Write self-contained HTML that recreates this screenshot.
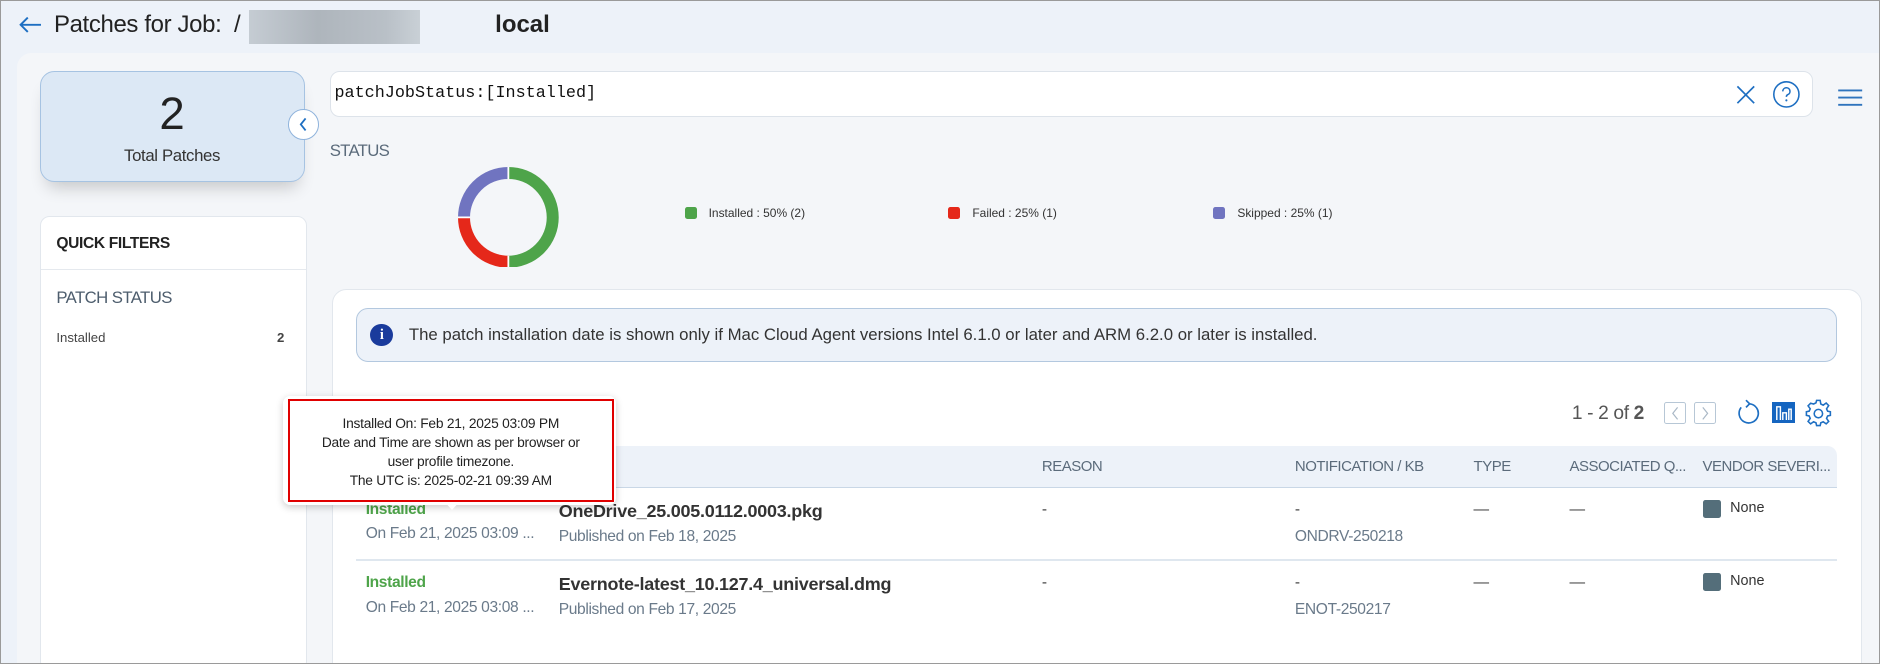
<!DOCTYPE html>
<html><head><meta charset="utf-8"><style>
*{box-sizing:border-box;margin:0;padding:0}
html,body{width:1880px;height:664px;overflow:hidden;background:#fff}
#w{zoom:1.19898;width:1568px;height:554px;position:relative;background:#edf2f9;font-family:"Liberation Sans",sans-serif;color:#222;overflow:hidden}
.a{position:absolute;white-space:nowrap}
.frame{position:absolute;left:0;top:0;width:1568px;height:554px;border:1.5px solid #9a9a9a;pointer-events:none;z-index:10}
.main{position:absolute;left:14px;top:44px;width:1560px;height:520px;background:#f4f6f9;border-radius:12px 0 0 0}
.hd{font-size:12.5px;color:#5b6b7b;letter-spacing:-0.4px}
.sm{letter-spacing:-0.3px}
</style></head><body><div id="w">
<div class="main"></div>
<svg class="a" style="left:14px;top:12px" width="22" height="18"><path d="M20 9H3M9 3L3 9l6 6" stroke="#1e6fc2" stroke-width="1.6" fill="none"/></svg>
<div class="a" style="left:45px;top:9px;font-size:20px;color:#222;letter-spacing:-0.3px">Patches for Job: &nbsp;/</div>
<div class="a" style="left:208px;top:8px;width:142px;height:29px;background:linear-gradient(90deg,#c5ccd3,#aeb5bc 40%,#b9c0c7 80%,#c9d0d6)"></div>
<div class="a" style="left:413px;top:9px;font-size:20px;font-weight:bold;color:#222">local</div>

<div class="a" style="left:33px;top:59px;width:221px;height:93px;background:#dce8f5;border:1px solid #a6c3e2;border-radius:12px;box-shadow:0 10px 14px -6px rgba(0,0,0,0.2)"></div>
<div class="a" style="left:33px;top:73px;width:221px;text-align:center;font-size:38px;color:#222">2</div>
<div class="a" style="left:33px;top:122px;width:221px;text-align:center;font-size:14px;color:#333;letter-spacing:-0.3px">Total Patches</div>
<div class="a" style="left:240px;top:91px;width:26px;height:26px;border-radius:50%;background:#fff;border:1px solid #8fb3dc"></div>
<svg class="a" style="left:247px;top:97px" width="12" height="14"><path d="M8 2L4 7l4 5" stroke="#1e6fc2" stroke-width="1.5" fill="none"/></svg>

<div class="a" style="left:33px;top:180px;width:223px;height:380px;background:#fff;border:1px solid #e2e7ed;border-radius:8px"></div>
<div class="a" style="left:47px;top:196px;font-size:13px;font-weight:bold;color:#222;letter-spacing:-0.3px">QUICK FILTERS</div>
<div class="a" style="left:34px;top:224px;width:221px;height:1px;background:#e5e9ee"></div>
<div class="a" style="left:47px;top:240px;font-size:14px;color:#4d5d6d;letter-spacing:-0.5px">PATCH STATUS</div>
<div class="a" style="left:47px;top:275px;font-size:11px;color:#444">Installed</div>
<div class="a" style="left:231px;top:275px;font-size:11px;font-weight:bold;color:#444">2</div>

<div class="a" style="left:275px;top:59px;width:1237px;height:39px;background:#fff;border:1px solid #dde3ea;border-radius:8px"></div>
<div class="a" style="left:279px;top:70px;font-family:'Liberation Mono',monospace;font-size:14px;color:#111">patchJobStatus:[Installed]</div>
<svg class="a" style="left:1447px;top:70px" width="18" height="18"><path d="M2 2L16 16M16 2L2 16" stroke="#1e6fc2" stroke-width="1.4"/></svg>
<svg class="a" style="left:1478px;top:67px" width="24" height="24"><circle cx="12" cy="12" r="10.5" stroke="#1e6fc2" stroke-width="1.3" fill="none"/><path d="M9 9.5a3 3 0 1 1 4 2.8c-.8.4-1 .9-1 1.8" stroke="#1e6fc2" stroke-width="1.3" fill="none"/><circle cx="12" cy="17" r=".9" fill="#1e6fc2"/></svg>
<svg class="a" style="left:1532px;top:73px" width="22" height="16"><path d="M1 2h20M1 8h20M1 14h20" stroke="#2f74bd" stroke-width="1.6"/></svg>

<div class="a" style="left:275px;top:118px;font-size:14px;color:#5b6b7b;letter-spacing:-0.6px">STATUS</div>
<svg class="a" style="left:382px;top:139px" width="84" height="84"><g fill="none" stroke-width="10"><path d="M42 5A37 37 0 0 1 42 79" stroke="#4ea44a"/><path d="M42 79A37 37 0 0 1 5 42" stroke="#e5281a"/><path d="M5 42A37 37 0 0 1 42 5" stroke="#7074c0"/></g><path d="M42 0v10M42 74v10M0 42h10" stroke="#fff" stroke-width="1.5"/></svg>
<div class="a" style="left:571px;top:173px;width:10px;height:10px;background:#4ea44a;border-radius:2px"></div>
<div class="a" style="left:591px;top:172px;font-size:10px;color:#333">Installed : 50% (2)</div>
<div class="a" style="left:791px;top:173px;width:10px;height:10px;background:#e5281a;border-radius:2px"></div>
<div class="a" style="left:811px;top:172px;font-size:10px;color:#333">Failed : 25% (1)</div>
<div class="a" style="left:1012px;top:173px;width:10px;height:10px;background:#7074c0;border-radius:2px"></div>
<div class="a" style="left:1032px;top:172px;font-size:10px;color:#333">Skipped : 25% (1)</div>

<div class="a" style="left:277px;top:241px;width:1276px;height:330px;background:#fff;border:1px solid #e2e7ed;border-radius:12px"></div>
<div class="a" style="left:297px;top:257px;width:1235px;height:45px;background:#edf2f9;border:1px solid #b3c8df;border-radius:10px"></div>
<div class="a" style="left:309px;top:270px;width:19px;height:19px;border-radius:50%;background:#1a3b9c;color:#fff;font-size:12px;font-weight:bold;text-align:center;line-height:19px;font-family:'Liberation Serif',serif">i</div>
<div class="a" style="left:341px;top:271px;font-size:14px;color:#333">The patch installation date is shown only if Mac Cloud Agent versions Intel 6.1.0 or later and ARM 6.2.0 or later is installed.</div>

<div class="a" style="left:1311px;top:336px;font-size:16px;color:#555;letter-spacing:-0.3px">1 - 2 of <b>2</b></div>
<div class="a" style="left:1388px;top:335px;width:18px;height:19px;border:1px solid #b7c7d6;border-radius:2px"></div>
<svg class="a" style="left:1391px;top:338px" width="12" height="14"><path d="M8 2L4 7l4 5" stroke="#aab8c6" fill="none"/></svg>
<div class="a" style="left:1413px;top:335px;width:18px;height:19px;border:1px solid #b7c7d6;border-radius:2px"></div>
<svg class="a" style="left:1416px;top:338px" width="12" height="14"><path d="M4 2l4 5-4 5" stroke="#aab8c6" fill="none"/></svg>
<svg class="a" style="left:1446px;top:333px" width="22" height="22"><path d="M13 4a8 8 0 1 1-7 3" stroke="#1e6fc2" stroke-width="1.4" fill="none"/><path d="M10 1l3 3-3 3" stroke="#1e6fc2" stroke-width="1.4" fill="none"/></svg>
<div class="a" style="left:1478px;top:335px;width:19px;height:18px;background:#1565c0"></div>
<svg class="a" style="left:1478px;top:335px" width="19" height="18"><path d="M4 15V4h3v11M9 15V9h3v6M14 15V6h2v9" stroke="#fff" stroke-width="1.2" fill="none"/></svg>
<svg class="a" style="left:1505px;top:332px" width="24" height="24"><path d="M10.5 2h3l.5 3 2 1 2.5-1.8 2.1 2.1L18.8 9l.9 2 2.3.5v3l-2.3.5-.9 2 1.8 2.5-2.1 2.1-2.5-1.8-2 .9-.5 2.3h-3l-.5-2.3-2-.9-2.5 1.8-2.1-2.1L5.2 17l-.9-2L2 14.5v-3l2.3-.5.9-2-1.8-2.5 2.1-2.1L8 5l2-1z" stroke="#1e6fc2" stroke-width="1.3" fill="none"/><circle cx="12" cy="13" r="3.5" stroke="#1e6fc2" stroke-width="1.3" fill="none"/></svg>

<div class="a" style="left:297px;top:372px;width:1235px;height:35px;background:#edf2f9;border-bottom:1px solid #c9d7e6;border-radius:8px 8px 0 0"></div>
<div class="a hd" style="left:466px;top:382px">TITLE</div>
<div class="a hd" style="left:869px;top:382px">REASON</div>
<div class="a hd" style="left:1080px;top:382px">NOTIFICATION / KB</div>
<div class="a hd" style="left:1229px;top:382px">TYPE</div>
<div class="a hd" style="left:1309px;top:382px">ASSOCIATED Q...</div>
<div class="a hd" style="left:1420px;top:382px">VENDOR SEVERI...</div>

<div class="a" style="left:305px;top:418px;font-size:13px;font-weight:bold;color:#4ea44a;letter-spacing:-0.3px">Installed</div>
<div class="a sm" style="left:305px;top:438px;font-size:13px;color:#6a7a8a">On Feb 21, 2025 03:09 ...</div>
<div class="a" style="left:466px;top:418px;font-size:15px;font-weight:bold;color:#333;letter-spacing:-0.2px">OneDrive_25.005.0112.0003.pkg</div>
<div class="a sm" style="left:466px;top:440px;font-size:13px;color:#6a7a8a">Published on Feb 18, 2025</div>
<div class="a" style="left:869px;top:418px;font-size:13px;color:#444">-</div>
<div class="a" style="left:1080px;top:418px;font-size:13px;color:#444">-</div>
<div class="a sm" style="left:1080px;top:440px;font-size:13px;color:#6a7a8a">ONDRV-250218</div>
<div class="a" style="left:1229px;top:418px;font-size:13px;color:#444">—</div>
<div class="a" style="left:1309px;top:418px;font-size:13px;color:#444">—</div>
<div class="a" style="left:1420px;top:417px;width:15px;height:15px;background:#546e7a;border-radius:2px"></div>
<div class="a" style="left:1443px;top:417px;font-size:12px;color:#333">None</div>
<div class="a" style="left:297px;top:466px;width:1235px;height:2px;background:#dfe7ef"></div>

<div class="a" style="left:305px;top:479px;font-size:13px;font-weight:bold;color:#4ea44a;letter-spacing:-0.3px">Installed</div>
<div class="a sm" style="left:305px;top:500px;font-size:13px;color:#6a7a8a">On Feb 21, 2025 03:08 ...</div>
<div class="a" style="left:466px;top:479px;font-size:15px;font-weight:bold;color:#333;letter-spacing:-0.2px">Evernote-latest_10.127.4_universal.dmg</div>
<div class="a sm" style="left:466px;top:501px;font-size:13px;color:#6a7a8a">Published on Feb 17, 2025</div>
<div class="a" style="left:869px;top:479px;font-size:13px;color:#444">-</div>
<div class="a" style="left:1080px;top:479px;font-size:13px;color:#444">-</div>
<div class="a sm" style="left:1080px;top:501px;font-size:13px;color:#6a7a8a">ENOT-250217</div>
<div class="a" style="left:1229px;top:479px;font-size:13px;color:#444">—</div>
<div class="a" style="left:1309px;top:479px;font-size:13px;color:#444">—</div>
<div class="a" style="left:1420px;top:478px;width:15px;height:15px;background:#546e7a;border-radius:2px"></div>
<div class="a" style="left:1443px;top:478px;font-size:12px;color:#333">None</div>

<div class="a" style="left:236px;top:330px;width:278px;height:91px;background:#fff;border-radius:6px;box-shadow:0 2px 6px rgba(0,0,0,0.2)"></div>
<div class="a" style="left:370px;top:418px;width:0;height:0;border-left:7px solid transparent;border-right:7px solid transparent;border-top:8px solid #fff"></div>
<div class="a" style="left:240px;top:333px;width:272px;height:86px;border:2px solid #e00000"></div>
<div class="a" style="left:240px;top:345px;width:272px;text-align:center;font-size:11.5px;line-height:16px;color:#222;white-space:normal;letter-spacing:-0.2px">Installed On: Feb 21, 2025 03:09 PM<br>Date and Time are shown as per browser or<br>user profile timezone.<br>The UTC is: 2025-02-21 09:39 AM</div>

<div class="frame"></div>
</div></body></html>
